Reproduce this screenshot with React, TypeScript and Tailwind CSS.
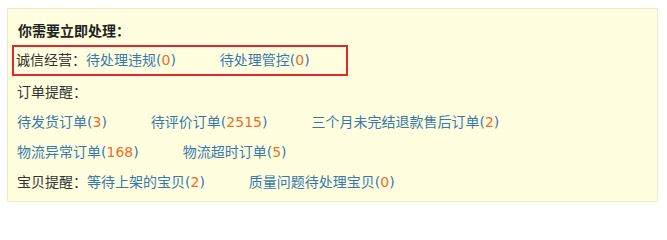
const font = { fontFamily: '"DejaVu Sans", "Noto Sans CJK SC", sans-serif' };

function Item({ label, count }: { label: string; count: number }) {
    return (
        <a href="#" className="mr-[44px] text-[#3779ad] no-underline">
            {label}(<span className="text-[#f26b2a]">{count}</span>)
        </a>
    );
}

export default function App() {
    return (
        <div className="w-[667px] h-[212px] bg-white pt-[8px] pl-[7px]" style={font}>
            <div className="w-[651px] h-[194px] bg-[#ffffdf] border border-[#f4e6c6] pt-[8px] pl-[9px] text-[14px] text-[#333]">
                <div className="h-[28px] leading-[28px] font-bold text-[#222] pl-[1px]">你需要立即处理：</div>

                <div className="w-[336px] h-[31px] ml-[-5px] pl-[2px] border-2 border-[#e5262f] flex items-center whitespace-nowrap">
                    <span>诚信经营：</span>
                    <Item label="待处理违规" count={0} />
                    <Item label="待处理管控" count={0} />
                </div>

                <div className="mt-[2px] h-[29px] leading-[29px]">订单提醒：</div>
                <div className="h-[30px] leading-[30px] flex whitespace-nowrap">
                    <Item label="待发货订单" count={3} />
                    <Item label="待评价订单" count={2515} />
                    <Item label="三个月未完结退款售后订单" count={2} />
                </div>
                <div className="h-[30px] leading-[30px] flex whitespace-nowrap">
                    <Item label="物流异常订单" count={168} />
                    <Item label="物流超时订单" count={5} />
                </div>
                <div className="h-[30px] leading-[30px] flex whitespace-nowrap">
                    <span>宝贝提醒：</span>
                    <Item label="等待上架的宝贝" count={2} />
                    <Item label="质量问题待处理宝贝" count={0} />
                </div>
            </div>
        </div>
    );
}
